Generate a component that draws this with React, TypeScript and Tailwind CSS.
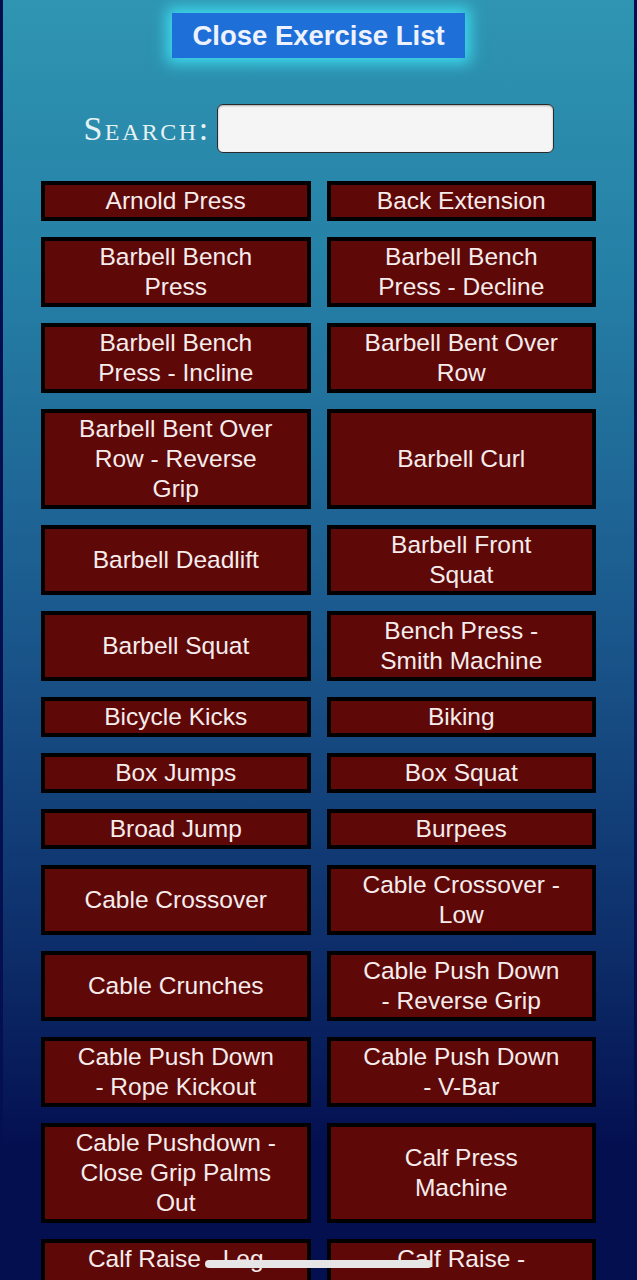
import React from 'react';

const exercises = [
  'Arnold Press',
  'Back Extension',
  'Barbell Bench Press',
  'Barbell Bench Press - Decline',
  'Barbell Bench Press - Incline',
  'Barbell Bent Over Row',
  'Barbell Bent Over Row - Reverse Grip',
  'Barbell Curl',
  'Barbell Deadlift',
  'Barbell Front Squat',
  'Barbell Squat',
  'Bench Press - Smith Machine',
  'Bicycle Kicks',
  'Biking',
  'Box Jumps',
  'Box Squat',
  'Broad Jump',
  'Burpees',
  'Cable Crossover',
  'Cable Crossover - Low',
  'Cable Crunches',
  'Cable Push Down - Reverse Grip',
  'Cable Push Down - Rope Kickout',
  'Cable Push Down - V-Bar',
  'Cable Pushdown - Close Grip Palms Out',
  'Calf Press Machine',
  'Calf Raise - Leg Press',
  'Calf Raise - Seated',
];

export default function App() {
  return (
    <div className="min-h-screen bg-[#040f50] px-[3px]">
      <div className="min-h-screen bg-[linear-gradient(to_bottom,#2f95b2_0%,#2580a6_20%,#1b5a8e_45%,#0d2e6a_70%,#040f50_85%)] pb-10 font-['Liberation_Sans',Arial,sans-serif]">
        <div className="flex justify-center pt-[13px]">
          <button className="h-[45px] w-[293px] bg-[#1f6fd8] text-[27.5px] font-bold text-[#eef2ff] shadow-[0_0_14px_5px_#3fdcef]">
            Close Exercise List
          </button>
        </div>

        <div className="mt-[46px] flex h-[49px] items-center justify-center gap-[6px]">
          <label className="font-['Liberation_Serif',serif] text-[34px] leading-[49px] tracking-[2.5px] text-[#e4f2f4] [font-variant:small-caps]">
            Search:
          </label>
          <input
            type="text"
            className="h-[49px] w-[337px] rounded-[6px] border border-[#2a2a2a] bg-[#f5f5f5] shadow-[inset_0_1px_2px_rgba(0,0,0,0.3)]"
          />
        </div>

        <div className="mt-[28px] grid grid-cols-2 gap-4 px-[38px]">
          {exercises.map((name) => (
            <button
              key={name}
              className="flex items-center justify-center border-4 border-black bg-[#5e0808] px-7 py-[1px] text-center text-[24.5px] leading-[30px] text-[#f6ecec]"
            >
              {name}
            </button>
          ))}
        </div>
      </div>

      <div className="fixed bottom-[12px] left-[205px] h-[8px] w-[227px] rounded-full bg-[#e6e6e6]" />
    </div>
  );
}
